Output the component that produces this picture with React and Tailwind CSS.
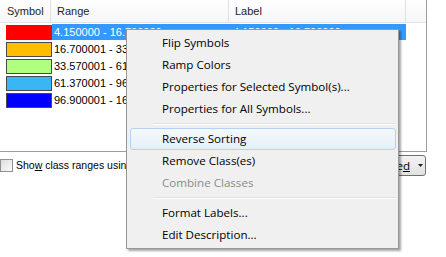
import React from "react";

const rows = [
  { color: "bg-[#ff0000] border-[#ff0000]", range: "4.150000 - 16.700000", selected: true },
  { color: "bg-[#ffbf00] border-[#4a4a4a]", range: "16.700001 - 33.570000" },
  { color: "bg-[#b0ff80] border-[#4a4a4a]", range: "33.570001 - 61.370000" },
  { color: "bg-[#38b6f6] border-[#4a4a4a]", range: "61.370001 - 96.900000" },
  { color: "bg-[#0000ff] border-[#4a4a4a]", range: "96.900001 - 168.000000" },
];

function MenuItem({ label, active, disabled }) {
  return (
    <div
      className={
        "ml-[1px] h-[22px] flex items-center pl-[31px] rounded-[3px] border " +
        (active
          ? "border-[#b4d2f6] bg-gradient-to-b from-[#f4f8fd] to-[#e6eff9]"
          : "border-transparent") +
        (disabled ? " text-[#8a8a8a]" : " text-black")
      }
    >
      {label}
    </div>
  );
}

function Separator() {
  return (
    <div className="h-[8px] flex items-center pl-[24px]">
      <div className="w-full border-t border-b border-t-[#e0e0e0] border-b-white" />
    </div>
  );
}

export default function App() {
  return (
    <div className="relative w-[446px] h-[257px] bg-white overflow-hidden font-['Liberation_Sans',Arial,sans-serif] text-[11px] text-black">
      {/* class list */}
      <div className="w-[427px] h-[152px] border-r border-b border-[#9c9c9c] flex flex-col">
        <div className="h-[23px] flex border-b border-[#e3e3e3] bg-gradient-to-b from-white to-[#f5f6f7] text-[#1e1e1e]">
          <div className="w-[51px] flex items-center pl-[7px] border-r border-[#e0e0e0]">Symbol</div>
          <div className="w-[178px] flex items-center pl-[6px] border-r border-[#e0e0e0]">Range</div>
          <div className="w-[177px] flex items-center pl-[6px] border-r border-[#e0e0e0]">Label</div>
          <div className="flex-1" />
        </div>
        <div className="mt-[1px] flex flex-col">
          {rows.map((r, i) => (
            <div key={i} className="h-[17px] flex">
              <div className="w-[52px] flex items-center pl-[6px]">
                <div className={"w-[46px] h-[15px] border " + r.color} />
              </div>
              <div className={"w-[354px] flex " + (r.selected ? "bg-[#3399ff] text-white h-[16px]" : "")}>
                <div className="w-[177px] flex items-center pl-[2px] whitespace-nowrap">{r.range}</div>
                <div className="w-[177px] flex items-center pl-[4px] whitespace-nowrap">{r.range}</div>
              </div>
            </div>
          ))}
        </div>
      </div>

      {/* bottom controls */}
      <div className="w-[427px] mt-[3px] h-[21px] flex items-center justify-between">
        <div className="flex items-center">
          <div className="w-[13px] h-[13px] border border-[#8e8f8f] bg-gradient-to-br from-[#dcdcdc] to-[#fbfbfb]" />
          <span className="ml-[3px] whitespace-nowrap text-[10.5px]">
            Sho<span className="underline">w</span> class ranges using feature values
          </span>
        </div>
        <div className="w-[75px] h-[21px] mr-[1px] rounded-[3px] border border-[#707070] bg-gradient-to-b from-[#f3f3f3] to-[#e2e2e2] flex items-center justify-end pr-[2px] font-['Open_Sans',sans-serif] text-[11.6px]">
          <span>
            Advance<span className="underline">d</span>
          </span>
          <svg width="5" height="3" viewBox="0 0 5 3" className="ml-[8px]">
            <path d="M0 0h5L2.5 3z" fill="#222" />
          </svg>
        </div>
      </div>

      {/* context menu */}
      <div className="absolute left-[126px] top-[29px] w-[273px] h-[220px] border border-[#979797] bg-[#f0f0f0] p-[2px] shadow-[2px_2px_2px_rgba(0,0,0,0.35)] font-['Open_Sans',sans-serif] text-[11.6px]">
        <MenuItem label="Flip Symbols" />
        <MenuItem label="Ramp Colors" />
        <MenuItem label="Properties for Selected Symbol(s)..." />
        <MenuItem label="Properties for All Symbols..." />
        <Separator />
        <MenuItem label="Reverse Sorting" active />
        <MenuItem label="Remove Class(es)" />
        <MenuItem label="Combine Classes" disabled />
        <Separator />
        <MenuItem label="Format Labels..." />
        <MenuItem label="Edit Description..." />
      </div>
    </div>
  );
}
